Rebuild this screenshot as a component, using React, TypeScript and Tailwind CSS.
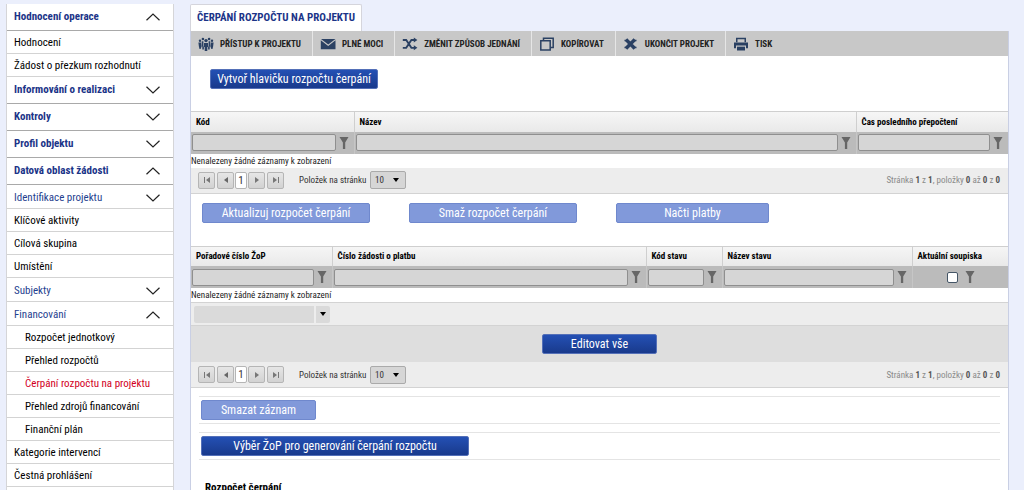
import { useState, type ReactNode } from 'react';
import clsx from 'clsx';

type MenuItem = {
    label: string;
    kind: 'section' | 'group' | 'item' | 'child';
    open?: boolean;
    active?: boolean;
};

const menu: MenuItem[] = [
    { label: 'Hodnocení operace', kind: 'section', open: true },
    { label: 'Hodnocení', kind: 'item' },
    { label: 'Žádost o přezkum rozhodnutí', kind: 'item' },
    { label: 'Informování o realizaci', kind: 'section' },
    { label: 'Kontroly', kind: 'section' },
    { label: 'Profil objektu', kind: 'section' },
    { label: 'Datová oblast žádosti', kind: 'section', open: true },
    { label: 'Identifikace projektu', kind: 'group' },
    { label: 'Klíčové aktivity', kind: 'item' },
    { label: 'Cílová skupina', kind: 'item' },
    { label: 'Umístění', kind: 'item' },
    { label: 'Subjekty', kind: 'group' },
    { label: 'Financování', kind: 'group', open: true },
    { label: 'Rozpočet jednotkový', kind: 'child' },
    { label: 'Přehled rozpočtů', kind: 'child' },
    { label: 'Čerpání rozpočtu na projektu', kind: 'child', active: true },
    { label: 'Přehled zdrojů financování', kind: 'child' },
    { label: 'Finanční plán', kind: 'child' },
    { label: 'Kategorie intervencí', kind: 'item' },
    { label: 'Čestná prohlášení', kind: 'item' },
];

const toolbar = [
    {
        label: 'PŘÍSTUP K PROJEKTU',
        icon: (
            <svg className="h-4 w-4" viewBox="0 0 16 16" fill="currentColor">
                <circle cx="8" cy="4.6" r="1.7" />
                <circle cx="4.9" cy="3" r="1.3" />
                <circle cx="11.1" cy="3" r="1.3" />
                <circle cx="2" cy="4.8" r="1.2" />
                <circle cx="14" cy="4.8" r="1.2" />
                <path d="M6 7h4v4H9.300v4H6.700v-4H6z" />
                <path d="M3.700 5.200h1.700v5.200h.5v3.200H4.300v-3.200h-.6zM12.300 5.200h-1.700v5.200h-.5v3.200h1.600v-3.200h.6z" />
                <path d="M.4 6.500h2.600l.6 4-1 2.500H1.500L.9 10.500zM15.600 6.500H13l-.6 4 1 2.500h1.100l.6-2.500z" />
            </svg>
        ),
    },
    {
        label: 'PLNÉ MOCI',
        icon: (
            <svg className="h-4 w-4" viewBox="0 0 16 16" fill="currentColor">
                <path d="M1 3h14.500L8.200 8.600z" />
                <path d="M.8 4.200l7.400 5.900 7.300-5.900v9H.8z" />
            </svg>
        ),
    },
    {
        label: 'ZMĚNIT ZPŮSOB JEDNÁNÍ',
        icon: (
            <svg className="h-4 w-4" viewBox="0 0 16 16" fill="none" stroke="currentColor" strokeWidth="1.8">
                <path d="M.8 4h3.400l5.200 7.800H12M.8 11.800h3.400L9.400 4H12" />
                <path d="M11.800 1.500L15.400 4l-3.600 2.500zM11.800 9.300l3.600 2.500-3.600 2.500z" fill="currentColor" stroke="none" />
            </svg>
        ),
    },
    {
        label: 'KOPÍROVAT',
        icon: (
            <svg className="h-4 w-4" viewBox="0 0 16 16" fill="none" stroke="currentColor" strokeWidth="1.5">
                <path d="M4.500 4.500V2.200h9.700v9.300H11.500" />
                <path d="M1.800 4.700h9.400v9.200H1.800z" />
            </svg>
        ),
    },
    {
        label: 'UKONČIT PROJEKT',
        icon: (
            <svg className="h-4 w-4" viewBox="0 0 16 16" fill="none" stroke="currentColor" strokeWidth="3.4">
                <path d="M3 3.500l8.800 9M11.800 3.500L3 12.500" />
                <path d="M1.500 4.500h3.500M10 4.500h3.500M1.500 11.600h3.500M10 11.600h3.500" strokeWidth="1.500" />
            </svg>
        ),
    },
    {
        label: 'TISK',
        icon: (
            <svg className="h-4 w-4" viewBox="0 0 16 16" fill="currentColor">
                <path d="M3 1.800h10v4.400h-1.500V3.300h-7v2.900H3z" />
                <path d="M1 6.500h14v5.800h-2V9.500H3v2.800H1z" />
                <path d="M4 10.700h8v3.800H4z" />
            </svg>
        ),
    },
];

function Chevron({ up }: { up?: boolean }) {
    return (
        <svg className="h-2 w-4 shrink-0" viewBox="0 0 16 8" fill="none" stroke="#222" strokeWidth="1.2">
            <path d={up ? 'M1.500 7.300L8 1l6.500 6.300' : 'M1.500 .7L8 7l6.500-6.300'} />
        </svg>
    );
}

function Sidebar() {
    return (
        <nav className="w-[168px] shrink-0 border-x border-[#d5d5d8] bg-white text-[11px] text-black">
            <ul>
                {menu.map((item) => (
                    <li key={item.label}>
                        <a
                            href="#"
                            className={clsx(
                                'flex items-center justify-between whitespace-nowrap border-b pr-3',
                                item.kind === 'child' ? 'pl-[18px]' : 'pl-[7px]',
                                item.kind === 'section' && 'h-[27px] border-[#a9a9a9] font-bold',
                                item.kind === 'group' && 'h-6 border-[#d3d3d3] pt-0.5',
                                (item.kind === 'item' || item.kind === 'child') && 'h-[23px] border-[#d3d3d3] pt-0.5',
                                item.kind === 'section' && 'text-[#1b3488]',
                                item.kind === 'group' && 'text-[#1f3f8f]',
                                item.active && 'text-[#d2001e]',
                            )}
                        >
                            {item.label}
                            {(item.kind === 'section' || item.kind === 'group') && <Chevron up={item.open} />}
                        </a>
                    </li>
                ))}
            </ul>
        </nav>
    );
}

function Button({ children, className, disabled }: { children: ReactNode; className?: string; disabled?: boolean }) {
    return (
        <button
            disabled={disabled}
            className={clsx(
                'h-5 whitespace-nowrap rounded-xs border text-[12px] leading-[18px] text-white',
                disabled ? 'border-[#6f88cd] bg-[#8199da]' : 'border-[#5470b8] bg-linear-to-b from-[#2450b4] to-[#193a8c]',
                className,
            )}
        >
            {children}
        </button>
    );
}

function Funnel() {
    return (
        <button aria-label="Filtr" className="flex w-4 shrink-0 justify-center">
            <svg className="h-3 w-[10px]" viewBox="0 0 10 12" fill="#666">
                <path d="M.5 0h9L6.200 5.500V12H3.900V5.500z" />
            </svg>
        </button>
    );
}

type Column = { label: string; width?: string; checkbox?: boolean };

function GridTable({ columns }: { columns: Column[] }) {
    return (
        <table className="w-full table-fixed border-collapse border-t border-[#cfcfcf] text-[9px]">
            <colgroup>
                {columns.map((col) => (
                    <col key={col.label} className={col.width} />
                ))}
            </colgroup>
            <thead>
                <tr className="h-5 bg-linear-to-b from-[#f6f6f6] to-[#e9e9e9]">
                    {columns.map((col) => (
                        <th key={col.label} className="border-r border-[#cfcfcf] p-0 pl-[5px] text-left font-bold whitespace-nowrap text-black last:border-r-0">
                            {col.label}
                        </th>
                    ))}
                </tr>
                <tr className="h-[22px] bg-[#bbb]">
                    {columns.map((col) => (
                        <td key={col.label} className="border-r border-[#c6c6c6] p-0 last:border-r-0">
                            {col.checkbox ? (
                                <div className="flex items-center justify-center gap-1 pl-1">
                                    <input
                                        type="checkbox"
                                        aria-label={col.label}
                                        className="h-[11px] w-[11px] appearance-none rounded-xs border border-[#456] bg-white checked:bg-[#2450b4]"
                                    />
                                    <Funnel />
                                </div>
                            ) : (
                                <div className="flex items-center pr-0.5 pl-px">
                                    <input
                                        type="text"
                                        aria-label={col.label}
                                        className="h-[17px] min-w-0 flex-1 rounded-xs border border-[#8f8f8f] bg-[#d6d6d6] px-1"
                                    />
                                    <Funnel />
                                </div>
                            )}
                        </td>
                    ))}
                </tr>
            </thead>
            <tbody>
                <tr className="h-[14px]">
                    <td colSpan={columns.length} className="p-0 leading-[14px] text-[#222]">
                        Nenalezeny žádné záznamy k zobrazení
                    </td>
                </tr>
            </tbody>
        </table>
    );
}

const pagerButton =
    'flex h-[17px] w-[17px] items-center justify-center rounded-xs border border-[#b5b5b5] bg-linear-to-b from-[#e6e6e6] to-[#d2d2d2]';

function Pager({ id }: { id: string }) {
    const [size, setSize] = useState('10');

    return (
        <div className="flex h-[26px] items-center border-b border-[#d3d3d3] bg-[#ededed] pr-2 pl-[7px] text-[9px] text-[#333]">
            <button aria-label="První" className={pagerButton}>
                <svg className="h-2 w-2" viewBox="0 0 8 8" fill="#777">
                    <path d="M1 1h1v6H1zM7 1v6L3 4z" />
                </svg>
            </button>
            <button aria-label="Předchozí" className={clsx(pagerButton, 'ml-0.5')}>
                <svg className="h-2 w-2" viewBox="0 0 8 8" fill="#666">
                    <path d="M6 1v6L2 4z" />
                </svg>
            </button>
            <button className="mx-px h-[17px] w-3 rounded-xs border border-[#b5b5b5] bg-white text-center text-[11px] leading-[15px]">
                1
            </button>
            <button aria-label="Další" className={pagerButton}>
                <svg className="h-2 w-2" viewBox="0 0 8 8" fill="#777">
                    <path d="M2 1v6l4-3z" />
                </svg>
            </button>
            <button aria-label="Poslední" className={clsx(pagerButton, 'ml-0.5')}>
                <svg className="h-2 w-2" viewBox="0 0 8 8" fill="#777">
                    <path d="M6 1h1v6H6zM1 1v6l4-3z" />
                </svg>
            </button>
            <label htmlFor={id} className="ml-[15px] w-[71px] whitespace-nowrap">
                Položek na stránku
            </label>
            <span className="relative">
                <select
                    id={id}
                    value={size}
                    onChange={(e) => setSize(e.target.value)}
                    className="block h-[18px] w-9 appearance-none rounded-xs border border-[#aaa] bg-[#d6d6d6] pl-1"
                >
                    <option>10</option>
                    <option>20</option>
                </select>
                <svg className="pointer-events-none absolute top-[7px] right-[7px] h-1 w-1.5" viewBox="0 0 6 4">
                    <path d="M0 0h6L3 4z" />
                </svg>
            </span>
            <span className="ml-auto text-[#8a8a8a]">
                Stránka <b className="text-[#555]">1</b> z <b className="text-[#555]">1</b>, položky{' '}
                <b className="text-[#555]">0</b> až <b className="text-[#555]">0</b> z <b className="text-[#555]">0</b>
            </span>
        </div>
    );
}

export default function App() {
    return (
        <div className="flex h-screen gap-4 overflow-hidden bg-[#ebeffc] pt-1 pr-[15px] pl-1.5 font-['Roboto_Condensed','Liberation_Sans_Narrow',Roboto,sans-serif] leading-4">
            <Sidebar />

            <main className="min-w-0 flex-1">
                <h1 className="inline-flex h-[27px] items-center rounded-t-xs border border-b-0 border-[#d5d5dc] bg-white px-1.5 align-top text-[11px] font-bold text-[#1b3488]">
                    ČERPÁNÍ ROZPOČTU NA PROJEKTU
                </h1>

                <div className="border-x border-[#c9cfe4] bg-white">
                    {/* Project actions */}
                    <div className="flex h-[25px] bg-[#c8c8c8] text-[9px] font-bold text-[#222]">
                        {toolbar.map((action) => (
                            <button
                                key={action.label}
                                className="flex items-center gap-1.5 border-r border-[#e6e6e6] pr-[11px] pl-[7px] whitespace-nowrap last:border-r-0"
                            >
                                <span className="text-[#2b4163]">{action.icon}</span>
                                {action.label}
                            </button>
                        ))}
                    </div>

                    <div className="flex h-[55px] items-start pt-[13px] pl-[19px]">
                        <Button className="w-[168px]">Vytvoř hlavičku rozpočtu čerpání</Button>
                    </div>

                    <GridTable
                        columns={[
                            { label: 'Kód', width: 'w-[163px]' },
                            { label: 'Název' },
                            { label: 'Čas posledního přepočtení', width: 'w-[152px]' },
                        ]}
                    />
                    <Pager id="budget-page-size" />

                    <div className="flex h-[52px] items-start gap-[39px] pt-[9px] pl-[11px]">
                        <Button disabled className="w-[168px]">Aktualizuj rozpočet čerpání</Button>
                        <Button disabled className="w-[168px]">Smaž rozpočet čerpání</Button>
                        <Button disabled className="w-[153px]">Načti platby</Button>
                    </div>

                    <GridTable
                        columns={[
                            { label: 'Pořadové číslo ŽoP', width: 'w-[141px]' },
                            { label: 'Číslo žádosti o platbu' },
                            { label: 'Kód stavu', width: 'w-[76px]' },
                            { label: 'Název stavu', width: 'w-[190px]' },
                            { label: 'Aktuální soupiska', width: 'w-[96px]', checkbox: true },
                        ]}
                    />
                    <div className="flex h-6 items-center border-y border-[#d3d3d3] bg-[#ededed] pl-[3px]">
                        <span className="relative">
                            <select aria-label="Pořadové číslo ŽoP" className="block h-[17px] w-[136px] appearance-none rounded-xs bg-[#dadada]">
                                <option></option>
                            </select>
                            <span className="pointer-events-none absolute top-0 right-0 flex h-[17px] w-4 items-center justify-center border-l-2 border-[#ededed]">
                                <svg className="h-1 w-1.5" viewBox="0 0 6 4">
                                    <path d="M0 0h6L3 4z" />
                                </svg>
                            </span>
                        </span>
                    </div>
                    <div className="flex h-9 items-center justify-center bg-[#dedede]">
                        <Button className="w-[115px]">Editovat vše</Button>
                    </div>
                    <Pager id="claims-page-size" />

                    {/* Record actions */}
                    <div className="space-y-2 px-2 pt-2">
                        <div className="flex h-7 items-center border-y border-[#e4e4e4] pl-0.5">
                            <Button disabled className="w-[115px]">Smazat záznam</Button>
                        </div>
                        <div className="flex h-7 items-center border-y border-[#e4e4e4] pl-0.5">
                            <Button className="w-[268px]">Výběr ŽoP pro generování čerpání rozpočtu</Button>
                        </div>
                    </div>

                    <h2 className="mt-5 h-10 pl-3.5 text-[11px] font-bold text-black">Rozpočet čerpání</h2>
                </div>
            </main>
        </div>
    );
}
